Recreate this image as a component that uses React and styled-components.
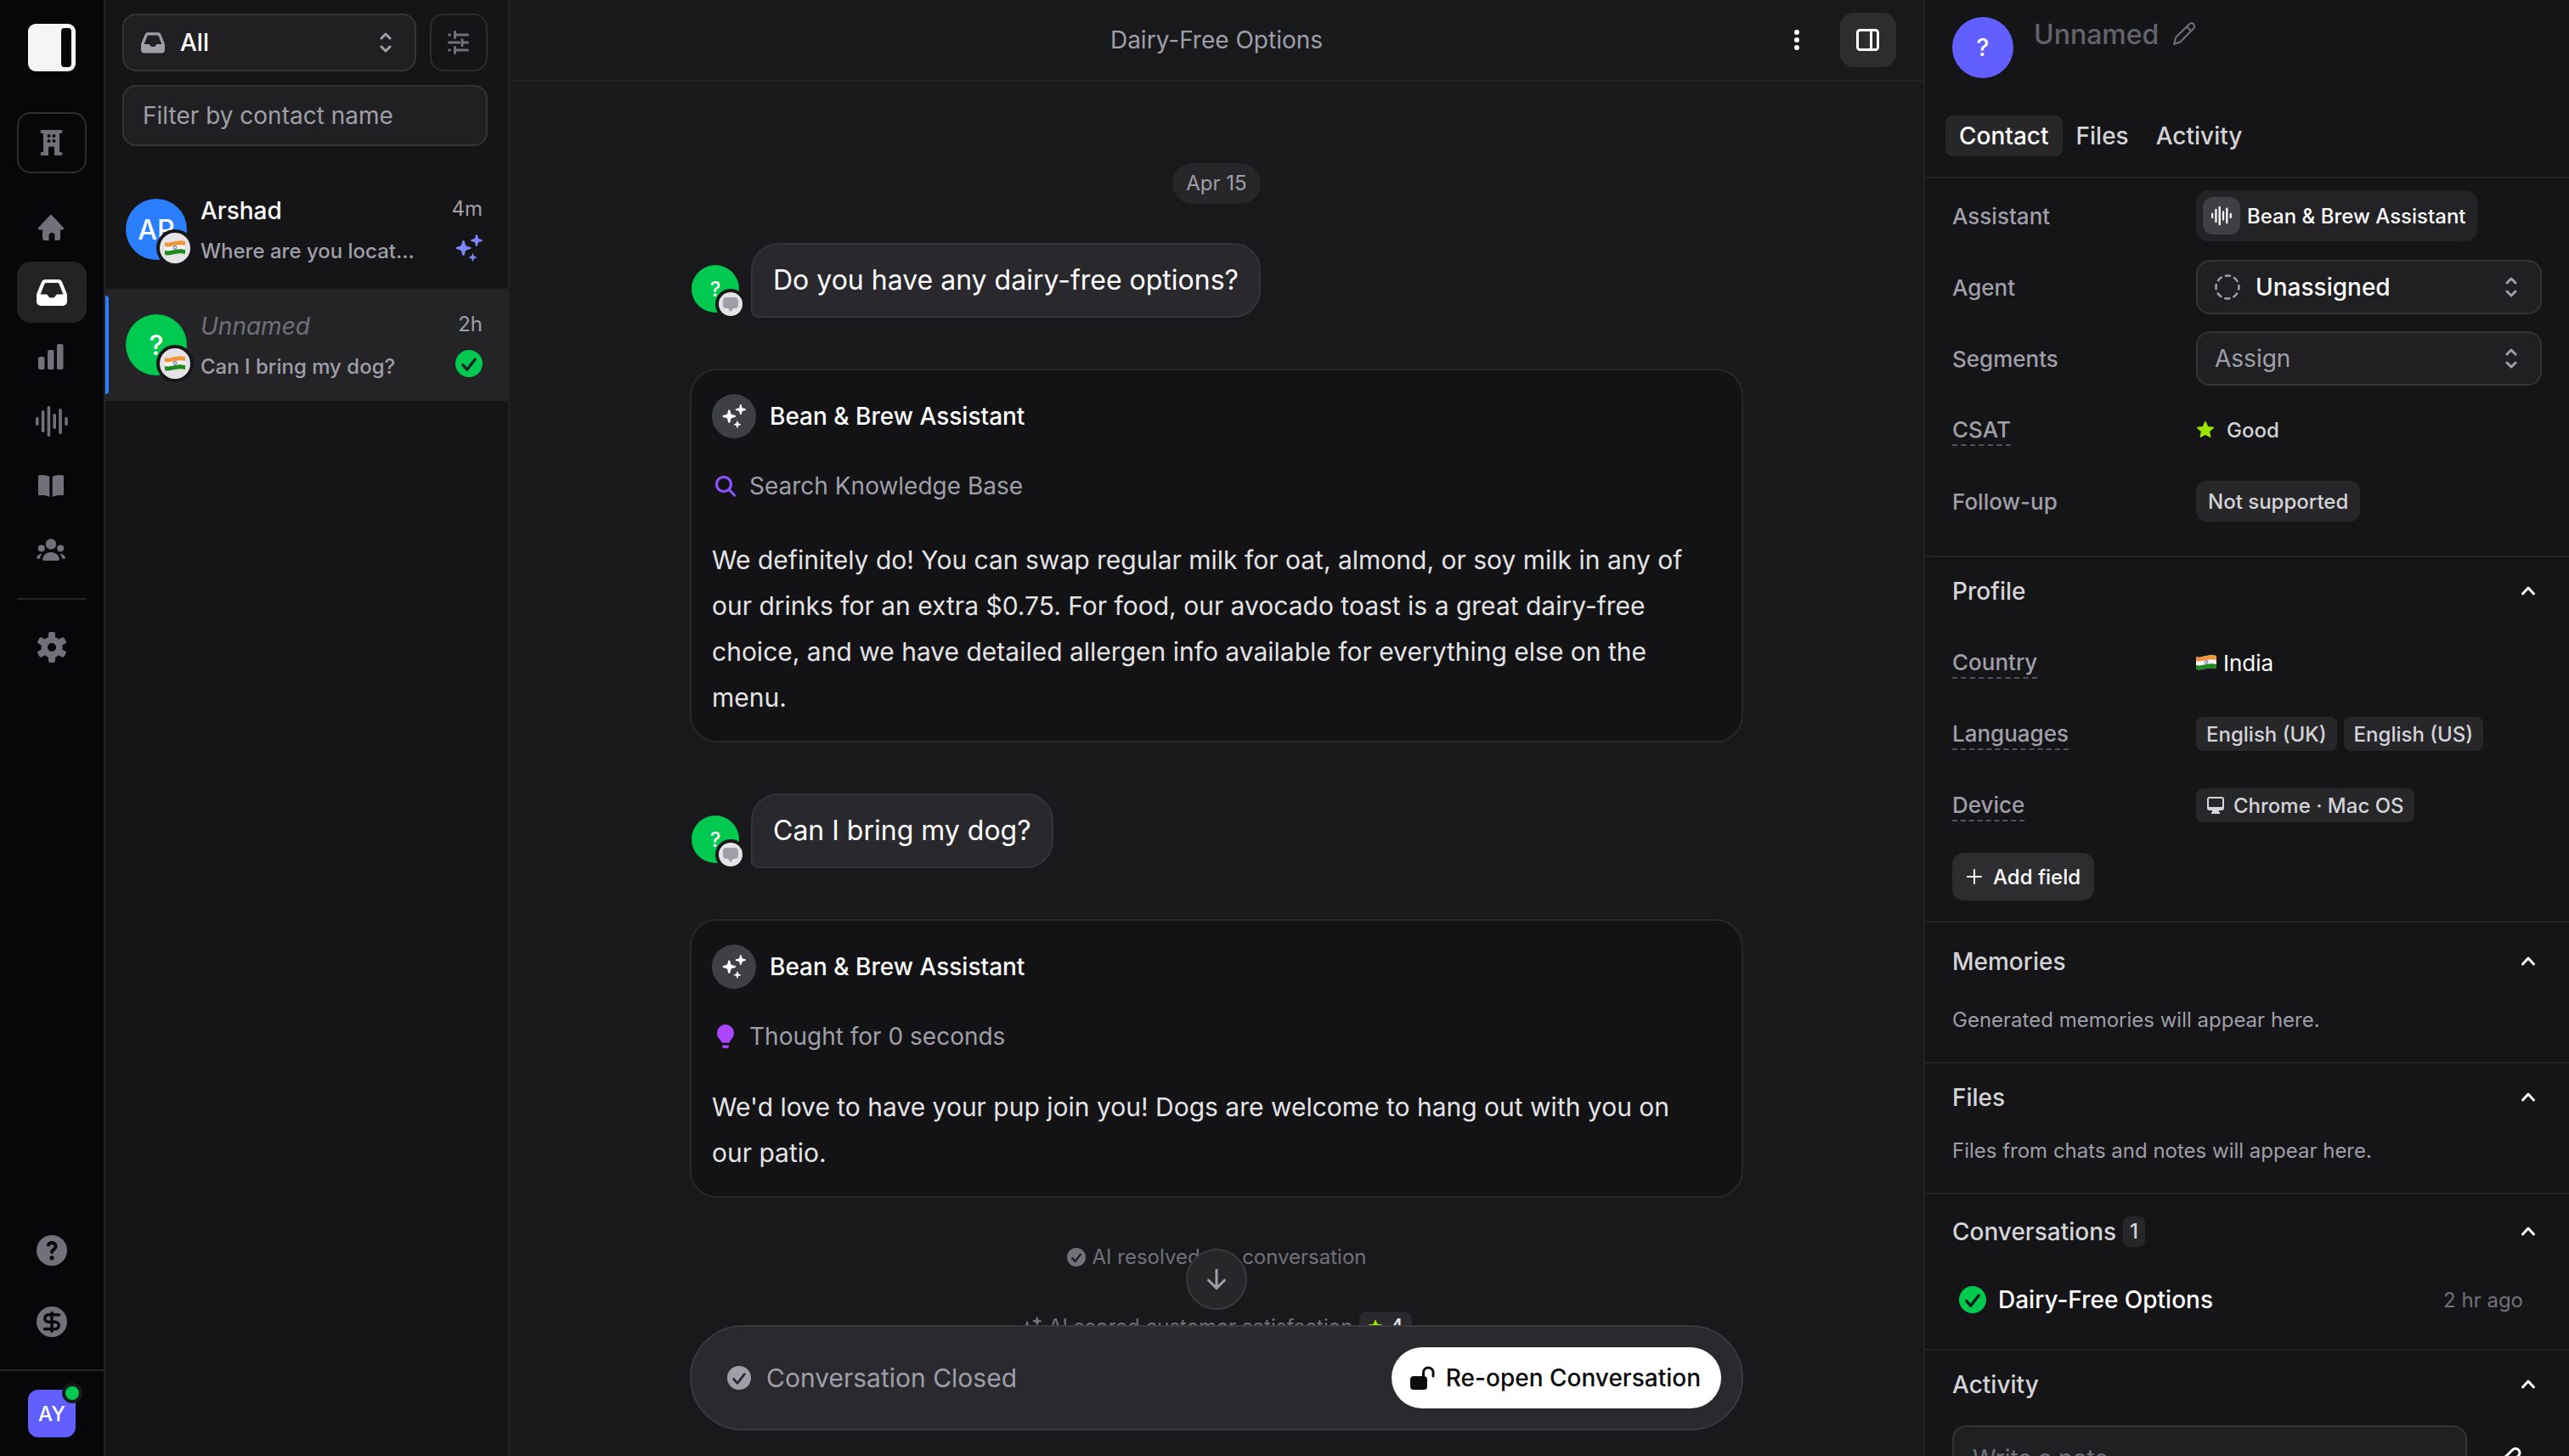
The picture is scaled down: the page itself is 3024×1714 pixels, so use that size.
import React from 'react';
import styled, { createGlobalStyle } from 'styled-components';

const GlobalStyle = createGlobalStyle`
  * {
    box-sizing: border-box;
  }

  body {
    margin: 0;
    overflow: hidden;
    background: #070709;
    color: #fff;
    font-family: Inter, 'Liberation Sans', sans-serif;
    font-size: 28px;
  }

  button,
  input,
  select,
  textarea {
    font: inherit;
    color: inherit;
    margin: 0;
  }

  button {
    border: 0;
    padding: 0;
    background: none;
    cursor: pointer;
  }

  h1, h2, h3, p, ul {
    margin: 0;
    padding: 0;
  }

  svg {
    display: block;
    flex-shrink: 0;
  }
`;

const Page = styled.div`
  display: flex;
  height: 100vh;
`;

/* ---------- icons ---------- */

const Icon = ({ size = 32, box = 32, color = 'currentColor', children }) => (
  <svg width={size} height={size} viewBox={`0 0 ${box} ${box}`} fill={color} aria-hidden="true">
    {children}
  </svg>
);

const stroke = (width) => ({
  fill: 'none',
  stroke: 'currentColor',
  strokeWidth: width,
  strokeLinecap: 'round',
  strokeLinejoin: 'round',
});

const LogoIcon = () => (
  <Icon size={56} box={56} color="#f5f5f5">
    <rect width="56" height="56" rx="9" />
    <rect x="39" y="5" width="12" height="46" rx="4" fill="#070709" />
  </Icon>
);

const BuildingIcon = () => (
  <Icon>
    <path
      fillRule="evenodd"
      d="M4.5 1h22a2 2 0 0 1 0 4H25v22h1.5a2 2 0 0 1 0 4H19v-9a1.5 1.5 0 0 0-1.5-1.5h-4A1.5 1.5 0 0 0 12 22v9H4.5a2 2 0 0 1 0-4H6V5H4.500a2 2 0 0 1 0-4ZM12.500 6a2 2 0 0 0 0 4 2 2 0 0 0 0-4Zm6 0a2 2 0 0 0 0 4 2 2 0 0 0 0-4Zm-6 6a2 2 0 0 0 0 4 2 2 0 0 0 0-4Zm6 0a2 2 0 0 0 0 4 2 2 0 0 0 0-4Z"
    />
  </Icon>
);

const HomeIcon = () => (
  <Icon>
    <path d="M13.5 1.7a2 2 0 0 1 3 0l13 14c1.1 1.3.4 2.8-1.3 2.8H26V28a3 3 0 0 1-3 3h-3.5v-5.500a3.500 3.500 0 0 0-7 0V31H8a3 3 0 0 1-3-3v-9.500H1.800c-1.700 0-2.400-1.500-1.300-2.800Z" />
  </Icon>
);

const InboxIcon = ({ size = 36 }) => (
  <Icon size={size} box={36}>
    <path
      fillRule="evenodd"
      d="M10.5 3h15a5 5 0 0 1 4.600 3.100l4.900 12c.6 1.500 1 2.500 1 4.400v6.500a5 5 0 0 1-5 5H5a5 5 0 0 1-5-5v-6.500c0-1.900.4-2.900 1-4.400l4.900-12A5 5 0 0 1 10.5 3Zm.8 4a2 2 0 0 0-1.900 1.300L4.600 20.500H11c1.200 0 2 .6 2.500 1.500.7 1.300 1.500 2.500 3 2.500h3c1.500 0 2.300-1.200 3-2.500.5-.9 1.300-1.500 2.500-1.500h6.400L26.600 8.300A2 2 0 0 0 24.700 7Z"
    />
  </Icon>
);

const BarsIcon = () => (
  <Icon>
    <rect x="0" y="16" width="7.5" height="15" rx="2" />
    <rect x="11" y="8" width="7.5" height="23" rx="2" />
    <rect x="22" y="1" width="7.5" height="30" rx="2" />
  </Icon>
);

const WaveIcon = ({ size = 38 }) => (
  <Icon size={size} box={38}>
    <rect x="0" y="14" width="3.6" height="10" rx="1.8" />
    <rect x="6.8" y="6" width="3.6" height="26" rx="1.8" />
    <rect x="13.6" y="1" width="3.6" height="36" rx="1.8" />
    <rect x="20.4" y="10" width="3.6" height="18" rx="1.8" />
    <rect x="27.2" y="4" width="3.6" height="30" rx="1.8" />
    <rect x="34.2" y="14" width="3.6" height="10" rx="1.8" />
  </Icon>
);

const BookIcon = () => (
  <Icon>
    <path d="M0 5c0-1.100.6-1.600 1.700-1.700C6 3 10 3.300 13.300 5v24C10 27 6 26.800 1.700 27 .6 27 0 26.500 0 25.500Z" />
    <path d="M30 5c0-1.100-.6-1.600-1.700-1.700C24 3 20 3.300 16.700 5v24c3.300-2 7.300-2.200 11.600-2 1.100 0 1.700-.5 1.700-1.500Z" />
  </Icon>
);

const PeopleIcon = () => (
  <Icon size={36} box={36}>
    <circle cx="17" cy="10.500" r="6.200" />
    <circle cx="5.800" cy="15.500" r="4" />
    <circle cx="28.200" cy="15.500" r="4" />
    <path d="M17 20c5.500 0 9.500 4 9.900 8 .1 1.200-.7 2-1.900 2H9c-1.200 0-2-.8-1.900-2 .4-4 4.400-8 9.900-8Z" />
    <path d="M6.600 21.800c-3.600.3-6 2.200-6.500 4.400-.2.900.5 1.600 1.500 1.600H4c.3-2.200 1.200-4.200 2.600-6Zm20.800 0c3.600.3 6 2.200 6.500 4.400.2.900-.5 1.600-1.500 1.600H30c-.3-2.200-1.200-4.200-2.600-6Z" />
  </Icon>
);

const GearIcon = () => (
  <Icon size={36} box={36}>
    {[0, 60, 120].map((angle) => (
      <rect key={angle} x="14" y="0" width="8" height="36" rx="2" transform={`rotate(${angle} 18 18)`} />
    ))}
    <circle cx="18" cy="18" r="12.500" />
    <circle cx="18" cy="18" r="5" fill="#070709" />
  </Icon>
);

const HelpIcon = () => (
  <Icon size={36} box={36}>
    <circle cx="18" cy="18" r="18" />
    <g {...stroke(4)} stroke="#070709">
      <path d="M14 11.500c1-2.200 3-2.700 4.500-2.500 2.600.3 4.300 2.300 4.100 4.700-.3 3-4.500 3.300-4.500 6.300" />
    </g>
    <circle cx="18" cy="26.800" r="2.600" fill="#070709" />
  </Icon>
);

const DollarIcon = () => (
  <Icon size={36} box={36}>
    <circle cx="18" cy="18" r="18" />
    <g {...stroke(3.5)} stroke="#070709">
      <path d="M26.500 9.800H14a4.200 4.200 0 0 0 0 8.400h8a4.200 4.200 0 0 1 0 8.400H9.500M18 7.500V29" />
    </g>
  </Icon>
);

const SelectorIcon = () => (
  <Icon size={24} box={24}>
    <path {...stroke(3)} d="m7 7 5-5 5 5M7 17l5 5 5-5" />
  </Icon>
);

const FiltersIcon = () => (
  <Icon size={28} box={28}>
    <path {...stroke(3)} d="M2.500 5h1M9.500 5h15M9.500 1.500v7M2.500 14h12M18 14h6.500M18 10.500v7M2.500 23h1M9.500 23h15M9.500 19.500v7" />
  </Icon>
);

const STAR4 =
  'M0-9C1-9 1.300-8 2-5 2.600-2.800 2.800-2.600 5-2 8-1.300 9-1 9 0S8 1.300 5 2C2.800 2.600 2.600 2.800 2 5 1.300 8 1 9 0 9S-1.300 8-2 5C-2.600 2.800-2.800 2.600-5 2-8 1.300-9 1-9 0S-8-1.300-5-2C-2.800-2.600-2.600-2.800-2-5-1.300-8-1-9 0-9Z';

const SparklesIcon = ({ size = 32 }) => (
  <Icon size={size}>
    <path d={STAR4} transform="translate(9.500 16)" />
    <path d={STAR4} transform="translate(25 7) scale(0.78)" />
    <path d={STAR4} transform="translate(20.500 27) scale(0.52)" />
  </Icon>
);

const CheckCircleIcon = ({ size = 32, mark = '#1f2023' }) => (
  <Icon size={size}>
    <circle cx="16" cy="16" r="16" />
    <path d="m8.800 17.500 4.900 5.700L23.200 11" fill="none" stroke={mark} strokeWidth="3.200" strokeLinecap="round" strokeLinejoin="round" />
  </Icon>
);

const DotsIcon = () => (
  <Icon size={32}>
    <circle cx="16" cy="7" r="3" />
    <circle cx="16" cy="16" r="3" />
    <circle cx="16" cy="25" r="3" />
  </Icon>
);

const SidebarIcon = () => (
  <Icon size={28} box={28}>
    <path {...stroke(3)} d="M4.500 2.500h18a3 3 0 0 1 3 3v17a3 3 0 0 1-3 3h-18a3 3 0 0 1-3-3v-17a3 3 0 0 1 3-3ZM17.500 2.500v23" />
  </Icon>
);

const ChatIcon = () => (
  <Icon size={20} box={20}>
    <path d="M5 2h10a4 4 0 0 1 4 4v5a4 4 0 0 1-4 4h-2l-3 4-3-4H5a4 4 0 0 1-4-4V6a4 4 0 0 1 4-4Z" />
  </Icon>
);

const SearchIcon = () => (
  <Icon size={32}>
    <path {...stroke(3.2)} d="M14 5.500a8.500 8.500 0 1 0 0 17 8.500 8.500 0 0 0 0-17ZM20.500 20.500 26.500 27" />
  </Icon>
);

const BulbIcon = () => (
  <Icon size={32}>
    <path d="M16 2a10 10 0 0 0-10 10c0 4 2 6 3.800 8.200.9 1.100 1.500 2.200 1.700 3.300h9c.2-1.100.8-2.200 1.700-3.300C24 18 26 16 26 12A10 10 0 0 0 16 2ZM12 26.500h8v.5a3 3 0 0 1-3 3h-2a3 3 0 0 1-3-3Z" />
  </Icon>
);

const ArrowDownIcon = () => (
  <Icon size={28} box={28}>
    <path {...stroke(3)} d="M14 3v21M4.500 15 14 24.500 23.500 15" />
  </Icon>
);

const StarIcon = ({ size = 20 }) => (
  <Icon size={size} box={20} color="#9ae600">
    <path
      d="m10 1.200 2.600 5.600 6.100.7-4.500 4.200 1.200 6.100L10 14.800l-5.400 3 1.200-6.100L1.300 7.500l6.100-.7Z"
      stroke="#9ae600"
      strokeLinejoin="round"
    />
  </Icon>
);

const UnlockIcon = () => (
  <Icon size={30} box={30}>
    <rect x="0" y="13" width="20" height="16" rx="4" />
    <path {...stroke(3)} d="M15.500 14V8a5.800 5.800 0 0 1 11.500 0v5" />
  </Icon>
);

const PencilIcon = () => (
  <Icon size={28} box={28}>
    <path {...stroke(2)} d="m2 26 2.200-8L20 2.500a3.200 3.200 0 0 1 5.200 4.800L9.500 23.300ZM17 5.500l5.200 5" />
  </Icon>
);

const DashedCircleIcon = () => (
  <Icon size={30} box={30}>
    <circle
      cx="15"
      cy="15"
      r="13.500"
      fill="none"
      stroke="currentColor"
      strokeWidth="2.500"
      strokeDasharray="5.300 5.300"
      strokeDashoffset="2.600"
      strokeLinecap="round"
    />
  </Icon>
);

const ChevronUpIcon = () => (
  <Icon size={24} box={24}>
    <path {...stroke(3)} d="m5.500 15 6.500-7 6.500 7" />
  </Icon>
);

const MonitorIcon = () => (
  <Icon size={22} box={22}>
    <path
      fillRule="evenodd"
      d="M4 1h14a3 3 0 0 1 3 3v10a3 3 0 0 1-3 3h-3v2h1v2H6v-2h1v-2H4a3 3 0 0 1-3-3V4a3 3 0 0 1 3-3Zm0 2a1 1 0 0 0-1 1v8a1 1 0 0 0 1 1h14a1 1 0 0 0 1-1V4a1 1 0 0 0-1-1Z"
    />
  </Icon>
);

const PlusIcon = () => (
  <Icon size={20} box={20}>
    <path {...stroke(2)} d="M10 2v16M2 10h16" />
  </Icon>
);

const ClipIcon = () => (
  <Icon size={32}>
    <path {...stroke(3)} d="m27 15-11 11a7 7 0 0 1-10-10L17.500 4.800a4.800 4.800 0 0 1 7 7L13.500 22.500" />
  </Icon>
);

const FlagIcon = ({ width = 24 }) => (
  <svg width={width} height={Math.round(width * 0.75)} viewBox="0 0 24 18" role="img" aria-label="India">
    <path d="M0 2c4 2 7 0 12-1s8-1 12 0v15c-4-1-7-1-12 0s-8 2-12 1Z" fill="#f4f4f4" />
    <path d="M0 2c4 1.500 7 0 12-1s8-1 12 0v5c-4-1-7-1-12 0s-8 2-12 1Z" fill="#f0953c" />
    <path d="M0 12c4 1 7 0 12-1s8-1 12 0v5c-4-1-7-1-12 0s-8 2-12 1Z" fill="#1d8a1d" />
    <circle cx="12" cy="8.500" r="1.800" fill="none" stroke="#4a5aa8" />
  </svg>
);

/* ---------- left rail ---------- */

const Rail = styled.nav`
  flex: 0 0 124px;
  display: flex;
  flex-direction: column;
  border-right: 2px solid #232326;
  background: #070709;
  color: #71717b;
`;

const RailMain = styled.div`
  flex: 1;
  display: flex;
  flex-direction: column;
  align-items: center;
  padding: 28px 20px;
`;

const RailButton = styled.button`
  display: flex;
  align-items: center;
  justify-content: center;
  width: 100%;
  height: 72px;
  border-radius: 16px;
  color: ${({ $active }) => ($active ? '#fff' : '#71717b')};
  background: ${({ $active }) => ($active ? '#232326' : 'transparent')};
`;

const WorkspaceButton = styled(RailButton)`
  margin: 48px 0 28px;
  border: 2px solid #2d2d30;
`;

const RailGroup = styled.div`
  display: flex;
  flex-direction: column;
  gap: ${({ $gap }) => $gap}px;
  width: 100%;
`;

const RailDivider = styled.div`
  width: 100%;
  height: 2px;
  margin: 20px 0;
  background: #232326;
`;

const RailFooter = styled.div`
  display: flex;
  justify-content: center;
  margin-top: 8px;
  padding: 22px 0;
  border-top: 2px solid #232326;
`;

const UserButton = styled.button`
  position: relative;
  width: 56px;
  height: 56px;
  border-radius: 12px;
  background: #615fff;
  color: #fff;
  font-size: 24px;
  font-weight: 500;
`;

const OnlineDot = styled.span`
  position: absolute;
  top: -8px;
  right: -8px;
  width: 24px;
  height: 24px;
  border: 4px solid #1a1a1d;
  border-radius: 50%;
  background: #00c950;
`;

/* ---------- shared controls ---------- */

const Avatar = styled.span`
  position: relative;
  flex-shrink: 0;
  display: flex;
  align-items: center;
  justify-content: center;
  width: ${({ $size }) => $size}px;
  height: ${({ $size }) => $size}px;
  border-radius: 50%;
  background: ${({ $color }) => $color};
  color: #fff;
  font-size: ${({ $font }) => $font}px;
  font-weight: 500;
`;

const AvatarBadge = styled.span`
  position: absolute;
  right: -8px;
  bottom: -8px;
  display: flex;
  align-items: center;
  justify-content: center;
  width: ${({ $size }) => $size}px;
  height: ${({ $size }) => $size}px;
  border: 4px solid #17171a;
  border-radius: 50%;
  background: #e4e4e7;
  color: #9f9fa9;
`;

const SelectBox = styled.label`
  flex: 1;
  min-width: 0;
  display: flex;
  align-items: center;
  gap: 18px;
  height: ${({ $height }) => $height}px;
  padding: 0 22px 0 20px;
  border: 2px solid #343437;
  border-radius: 16px;
  background: #202022;
  color: #9f9fa9;
`;

const Select = styled.select`
  flex: 1;
  min-width: 0;
  appearance: none;
  border: 0;
  outline: 0;
  padding: 0;
  background: transparent;
  color: ${({ $muted }) => ($muted ? '#9f9fa9' : '#fff')};
  font-weight: ${({ $muted }) => ($muted ? 400 : 500)};
`;

/* ---------- conversation list ---------- */

const ListPanel = styled.aside`
  flex: 0 0 476px;
  min-width: 0;
  border-right: 2px solid #232326;
  background: #151517;
`;

const ListHeader = styled.div`
  display: flex;
  flex-wrap: wrap;
  gap: 16px;
  padding: 16px 24px 32px 20px;
`;

const FilterButton = styled.button`
  display: flex;
  align-items: center;
  justify-content: center;
  width: 68px;
  height: 68px;
  border: 2px solid #2d2d30;
  border-radius: 16px;
  color: #71717b;
`;

const FilterInput = styled.input`
  width: 100%;
  height: 72px;
  padding: 0 22px;
  border: 2px solid #343437;
  border-radius: 16px;
  background: #202022;
  outline: 0;

  &::placeholder {
    color: #9f9fa9;
    opacity: 1;
  }
`;

const Chats = styled.ul`
  display: flex;
  flex-direction: column;
  gap: 4px;
  list-style: none;
`;

const Chat = styled.li`
  position: relative;
  display: flex;
  align-items: center;
  gap: 16px;
  height: 132px;
  padding: 0 28px 0 24px;
  background: ${({ $active }) => ($active ? '#242426' : 'transparent')};
`;

const ActiveBar = styled.span`
  position: absolute;
  left: 0;
  top: 8px;
  bottom: 8px;
  width: 4px;
  border-radius: 0 4px 4px 0;
  background: #2b7fff;
`;

const ChatText = styled.div`
  flex: 1;
  min-width: 0;
  display: flex;
  flex-direction: column;
  gap: 8px;
  padding-top: 4px;
`;

const ChatName = styled.span`
  line-height: 40px;
  font-weight: ${({ $unnamed }) => ($unnamed ? 400 : 500)};
  font-style: ${({ $unnamed }) => ($unnamed ? 'italic' : 'normal')};
  color: ${({ $unnamed }) => ($unnamed ? '#71717b' : '#fff')};
`;

const ChatPreview = styled.span`
  white-space: nowrap;
  font-size: 24px;
  line-height: 40px;
  font-weight: 500;
  color: #9f9fa9;
`;

const ChatMeta = styled.div`
  flex: 0 0 56px;
  display: flex;
  flex-direction: column;
  align-items: flex-end;
  gap: 12px;
  padding: 0 2px 4px 0;
  color: ${({ $color }) => $color};
`;

const ChatTime = styled.span`
  font-size: 24px;
  line-height: 36px;
  color: #9f9fa9;
`;

/* ---------- conversation ---------- */

const Main = styled.main`
  position: relative;
  flex: 1;
  min-width: 0;
  display: flex;
  flex-direction: column;
  background: #19191b;
`;

const MainHeader = styled.header`
  flex: 0 0 96px;
  display: grid;
  grid-template-columns: 1fr auto 1fr;
  align-items: center;
  border-bottom: 2px solid #232326;
`;

const Title = styled.h1`
  grid-column: 2;
  font-size: 28px;
  font-weight: 400;
  color: #9f9fa9;
`;

const HeaderActions = styled.div`
  display: flex;
  justify-content: flex-end;
  gap: 18px;
  padding-right: 32px;
`;

const HeaderButton = styled.button`
  display: flex;
  align-items: center;
  justify-content: center;
  width: 66px;
  height: 64px;
  border-radius: 16px;
  color: #fff;
  background: ${({ $active }) => ($active ? '#2d2d30' : 'transparent')};
`;

const Thread = styled.div`
  flex: 1;
  min-height: 0;
  overflow: hidden;
  display: flex;
  flex-direction: column;
  width: 100%;
  max-width: 1240px;
  margin: 0 auto;
  padding-top: 96px;
`;

const DatePill = styled.div`
  align-self: center;
  padding: 0 16px;
  border-radius: 24px;
  background: #27272a;
  color: #9f9fa9;
  font-size: 24px;
  line-height: 48px;
`;

const UserMessage = styled.div`
  display: flex;
  align-items: flex-end;
  gap: 14px;
  padding: 0 2px;
  margin-top: ${({ $first }) => ($first ? 46 : 60)}px;

  ${Avatar} {
    margin-bottom: 6px;
  }

  ${AvatarBadge} {
    border-color: #19191b;
  }
`;

const Bubble = styled.p`
  padding: 18px 24px;
  border: 2px solid #343437;
  border-radius: 32px 32px 32px 8px;
  background: #29292d;
  font-size: 32px;
  line-height: 48px;
`;

const ReplyCard = styled.article`
  margin-top: 60px;
  padding: 28px 24px 24px;
  border: 2px solid #28282b;
  border-radius: 32px;
  background: #131315;
`;

const ReplyHeader = styled.h2`
  display: flex;
  align-items: center;
  gap: 16px;
  font-size: 28px;
  font-weight: 500;
`;

const ToolRow = styled.button`
  display: flex;
  align-items: center;
  gap: 12px;
  height: 56px;
  margin: 28px 0 ${({ $gap }) => $gap}px;
  color: #9f9fa9;
`;

const ToolIcon = styled.span`
  color: ${({ $color }) => $color};
`;

const ReplyText = styled.p`
  padding-right: 32px;
  font-size: 30px;
  line-height: 54px;
  color: #e4e4e7;
`;

const Events = styled.div`
  display: flex;
  flex-direction: column;
  gap: 46px;
  margin-top: 52px;
`;

const Event = styled.div`
  display: flex;
  align-items: center;
  justify-content: center;
  gap: 8px;
  font-size: 24px;
  line-height: 36px;
  color: #71717b;
`;

const Score = styled.span`
  display: flex;
  align-items: center;
  gap: 8px;
  padding: 0 10px;
  border-radius: 8px;
  background: #29292d;
  color: #e4e4e7;
  font-weight: 500;
`;

/* floats over the end of the thread */
const Footer = styled.footer`
  position: absolute;
  left: 0;
  right: 0;
  bottom: 0;
  display: flex;
  flex-direction: column;
  align-items: center;
  gap: 18px;
`;

const ScrollButton = styled.button`
  display: flex;
  align-items: center;
  justify-content: center;
  width: 72px;
  height: 72px;
  border: 2px solid #3a3a3e;
  border-radius: 50%;
  background: #27272a;
  color: #9f9fa9;
`;

const ClosedWrap = styled.div`
  width: 100%;
  max-width: 1240px;
  padding-bottom: 30px;
  background: #19191b;
  border-radius: 62px 62px 0 0;
`;

const ClosedBar = styled.div`
  display: flex;
  align-items: center;
  gap: 18px;
  height: 124px;
  padding: 0 24px 0 42px;
  border: 2px solid #3a3a3e;
  border-radius: 62px;
  background: #2a2a2e;
  color: #9f9fa9;
  font-size: 30px;
`;

const ReopenButton = styled.button`
  display: flex;
  align-items: center;
  gap: 12px;
  height: 72px;
  margin-left: auto;
  padding: 0 24px 0 22px;
  border-radius: 36px;
  background: #fff;
  color: #0c0c0e;
  font-size: 28px;
  font-weight: 500;
`;

/* ---------- contact panel ---------- */

const Details = styled.aside`
  flex: 0 0 760px;
  min-width: 0;
  overflow: hidden;
  border-left: 2px solid #232326;
  background: #151517;
`;

const ContactHead = styled.div`
  display: flex;
  gap: 24px;
  padding: 20px 32px 44px;
`;

const ContactName = styled.h2`
  display: flex;
  align-items: center;
  gap: 16px;
  height: 40px;
  color: #63636c;
  font-size: 32px;
  font-weight: 500;
`;

const IconButton = styled.button`
  color: ${({ $color }) => $color};
`;

const Tabs = styled.div`
  display: flex;
  padding: 0 24px 24px;
`;

const Tab = styled.button`
  height: 48px;
  padding: 0 16px;
  border-radius: 8px;
  background: ${({ $active }) => ($active ? '#27272a' : 'transparent')};
  color: ${({ $active }) => ($active ? '#fff' : '#d4d4d8')};
  font-weight: 500;
`;

const Section = styled.section`
  padding: ${({ $top }) => $top}px 32px ${({ $bottom }) => $bottom}px;
  border-top: 2px solid #232326;
`;

const SectionHead = styled.div`
  display: flex;
  align-items: center;
  justify-content: space-between;
  height: 40px;
  padding-right: 4px;
  margin-bottom: ${({ $gap }) => $gap}px;
`;

const SectionTitle = styled.h3`
  display: flex;
  align-items: center;
  gap: 8px;
  color: #d4d4d8;
  font-size: 28px;
  font-weight: 500;
`;

const Count = styled.span`
  padding: 0 8px;
  border-radius: 8px;
  background: #27272a;
  font-size: 24px;
  line-height: 36px;
`;

const Fields = styled.div`
  display: flex;
  flex-direction: column;
  gap: 20px;
`;

const Field = styled.div`
  display: grid;
  grid-template-columns: 287px 1fr;
  align-items: center;
  height: 64px;
`;

const FieldLabel = styled.label`
  justify-self: start;
  padding-top: 2px;
  color: #9f9fa9;
  font-size: 26px;
  line-height: 34px;
  font-weight: 500;
  border-bottom: ${({ $hint }) => ($hint ? '2px dashed #52525c' : '0')};
`;

const FieldValue = styled.div`
  display: flex;
  align-items: center;
  gap: ${({ $gap = 8 }) => $gap}px;
  color: ${({ $bright }) => ($bright ? '#fff' : '#d4d4d8')};
  font-size: ${({ $bright }) => ($bright ? 26 : 24)}px;
  font-weight: ${({ $bright }) => ($bright ? 400 : 500)};
`;

const AssistantChip = styled.span`
  display: flex;
  align-items: center;
  gap: 8px;
  height: 60px;
  padding: 0 14px 0 8px;
  border-radius: 14px;
  background: #232326;
  color: #fff;
  font-size: 24px;
  font-weight: 500;
`;

const AssistantGlyph = styled.span`
  display: flex;
  align-items: center;
  justify-content: center;
  width: 44px;
  height: 44px;
  border-radius: 12px;
  background: #3f3f46;
`;

const Chip = styled.span`
  display: flex;
  align-items: center;
  gap: 10px;
  height: ${({ $tall }) => ($tall ? 48 : 40)}px;
  padding: 0 ${({ $tall }) => ($tall ? 14 : 12)}px;
  border-radius: ${({ $tall }) => ($tall ? 12 : 8)}px;
  background: #27272a;
  color: #d4d4d8;
  font-size: 24px;
  font-weight: 500;
  white-space: nowrap;
`;

const AddButton = styled.button`
  display: flex;
  align-items: center;
  gap: 12px;
  height: 56px;
  margin-top: 24px;
  padding: 0 16px;
  border-radius: 14px;
  background: #2d2d30;
  color: #fff;
  font-size: 24px;
  font-weight: 500;
`;

const Note = styled.p`
  color: #9f9fa9;
  font-size: 24px;
  line-height: 38px;
`;

const PastChat = styled.div`
  display: flex;
  align-items: center;
  gap: 14px;
  height: 56px;
  padding: 0 22px 0 8px;
  font-weight: 500;
`;

const PastTime = styled.span`
  margin-left: auto;
  color: #71717b;
  font-size: 24px;
  font-weight: 400;
`;

const NoteRow = styled.div`
  display: flex;
  align-items: flex-start;
  gap: 36px;
`;

const NoteInput = styled.textarea`
  flex: 1;
  min-width: 0;
  height: 120px;
  padding: 20px 22px;
  border: 2px solid #343437;
  border-radius: 16px;
  background: #202022;
  resize: none;
  outline: 0;

  &::placeholder {
    color: #71717b;
    opacity: 1;
  }
`;

const ClipButton = styled(IconButton)`
  padding: 24px 20px 0 0;
`;

const nav = [
  { label: 'Home', icon: <HomeIcon /> },
  { label: 'Inbox', icon: <InboxIcon />, active: true },
  { label: 'Reports', icon: <BarsIcon /> },
  { label: 'Assistants', icon: <WaveIcon /> },
  { label: 'Knowledge', icon: <BookIcon /> },
  { label: 'Contacts', icon: <PeopleIcon /> },
];

const chats = [
  {
    initials: 'AR',
    color: '#2b7fff',
    name: 'Arshad',
    preview: 'Where are you locat...',
    time: '4m',
    icon: <SparklesIcon />,
    iconColor: '#7c86ff',
  },
  {
    initials: '?',
    color: '#00c950',
    name: 'Unnamed',
    unnamed: true,
    preview: 'Can I bring my dog?',
    time: '2h',
    icon: <CheckCircleIcon />,
    iconColor: '#00c950',
    active: true,
  },
];

const CustomerMessage = ({ first, children }) => (
  <UserMessage $first={first}>
    <Avatar $size={56} $font={24} $color="#00c950">
      ?
      <AvatarBadge $size={36}>
        <ChatIcon />
      </AvatarBadge>
    </Avatar>
    <Bubble>{children}</Bubble>
  </UserMessage>
);

const Reply = ({ tool, toolIcon, toolColor, gap, children }) => (
  <ReplyCard>
    <ReplyHeader>
      <Avatar $size={52} $font={24} $color="#3f3f46">
        <SparklesIcon size={28} />
      </Avatar>
      Bean &amp; Brew Assistant
    </ReplyHeader>
    <ToolRow $gap={gap}>
      <ToolIcon $color={toolColor}>{toolIcon}</ToolIcon>
      {tool}
    </ToolRow>
    <ReplyText>{children}</ReplyText>
  </ReplyCard>
);

const PanelSection = ({ title, count, top = 20, bottom = 32, gap = 30, children }) => (
  <Section $top={top} $bottom={bottom}>
    <SectionHead $gap={gap}>
      <SectionTitle>
        {title}
        {count && <Count>{count}</Count>}
      </SectionTitle>
      <IconButton $color="#fff" aria-label={`Collapse ${title}`}>
        <ChevronUpIcon />
      </IconButton>
    </SectionHead>
    {children}
  </Section>
);

const App = () => {
  return (
    <Page>
      <GlobalStyle />
      <Rail>
        <RailMain>
          <LogoIcon />
          <WorkspaceButton aria-label="Workspace">
            <BuildingIcon />
          </WorkspaceButton>
          <RailGroup $gap={4}>
            {nav.map((item) => (
              <RailButton key={item.label} $active={item.active} aria-label={item.label}>
                {item.icon}
              </RailButton>
            ))}
          </RailGroup>
          <RailDivider />
          <RailButton aria-label="Settings">
            <GearIcon />
          </RailButton>
        </RailMain>
        <RailGroup $gap={12}>
          <RailButton aria-label="Help">
            <HelpIcon />
          </RailButton>
          <RailButton aria-label="Billing">
            <DollarIcon />
          </RailButton>
          <RailFooter>
            <UserButton>
              AY
              <OnlineDot />
            </UserButton>
          </RailFooter>
        </RailGroup>
      </Rail>

      <ListPanel>
        <ListHeader>
          <SelectBox $height={68}>
            <InboxIcon size={28} />
            <Select aria-label="Inbox">
              <option>All</option>
            </Select>
            <SelectorIcon />
          </SelectBox>
          <FilterButton aria-label="Filters">
            <FiltersIcon />
          </FilterButton>
          <FilterInput aria-label="Filter by contact name" placeholder="Filter by contact name" />
        </ListHeader>
        <Chats>
          {chats.map((chat) => (
            <Chat key={chat.name} $active={chat.active}>
              {chat.active && <ActiveBar />}
              <Avatar $size={72} $font={32} $color={chat.color}>
                {chat.initials}
                <AvatarBadge $size={44}>
                  <FlagIcon />
                </AvatarBadge>
              </Avatar>
              <ChatText>
                <ChatName $unnamed={chat.unnamed}>{chat.name}</ChatName>
                <ChatPreview>{chat.preview}</ChatPreview>
              </ChatText>
              <ChatMeta $color={chat.iconColor}>
                <ChatTime>{chat.time}</ChatTime>
                {chat.icon}
              </ChatMeta>
            </Chat>
          ))}
        </Chats>
      </ListPanel>

      <Main>
        <MainHeader>
          <Title>Dairy-Free Options</Title>
          <HeaderActions>
            <HeaderButton aria-label="More">
              <DotsIcon />
            </HeaderButton>
            <HeaderButton $active aria-label="Toggle details">
              <SidebarIcon />
            </HeaderButton>
          </HeaderActions>
        </MainHeader>
        <Thread>
          <DatePill>Apr 15</DatePill>
          <CustomerMessage first>Do you have any dairy-free options?</CustomerMessage>
          <Reply tool="Search Knowledge Base" toolIcon={<SearchIcon />} toolColor="#8e51ff" gap={32}>
            We definitely do! You can swap regular milk for oat, almond, or soy milk in any of our drinks for an extra
            $0.75. For food, our avocado toast is a great dairy-free choice, and we have detailed allergen info
            available for everything else on the menu.
          </Reply>
          <CustomerMessage>Can I bring my dog?</CustomerMessage>
          <Reply tool="Thought for 0 seconds" toolIcon={<BulbIcon />} toolColor="#ad46ff" gap={28}>
            We'd love to have your pup join you! Dogs are welcome to hang out with you on our patio.
          </Reply>
          <Events>
            <Event>
              <CheckCircleIcon size={22} mark="#19191b" />
              AI resolved the conversation
            </Event>
            <Event>
              <SparklesIcon size={24} />
              AI scored customer satisfaction
              <Score>
                <StarIcon size={18} />4
              </Score>
            </Event>
          </Events>
        </Thread>
        <Footer>
          <ScrollButton aria-label="Scroll to latest">
            <ArrowDownIcon />
          </ScrollButton>
          <ClosedWrap>
            <ClosedBar>
              <CheckCircleIcon size={28} mark="#2a2a2e" />
              Conversation Closed
              <ReopenButton>
                <UnlockIcon />
                Re-open Conversation
              </ReopenButton>
            </ClosedBar>
          </ClosedWrap>
        </Footer>
      </Main>

      <Details>
        <ContactHead>
          <Avatar $size={72} $font={28} $color="#615fff">
            ?
          </Avatar>
          <ContactName>
            Unnamed
            <IconButton $color="#71717b" aria-label="Edit name">
              <PencilIcon />
            </IconButton>
          </ContactName>
        </ContactHead>
        <Tabs>
          <Tab $active>Contact</Tab>
          <Tab>Files</Tab>
          <Tab>Activity</Tab>
        </Tabs>

        <Section $top={12} $bottom={32}>
          <Fields>
            <Field>
              <FieldLabel as="span">Assistant</FieldLabel>
              <FieldValue>
                <AssistantChip>
                  <AssistantGlyph>
                    <WaveIcon size={24} />
                  </AssistantGlyph>
                  Bean &amp; Brew Assistant
                </AssistantChip>
              </FieldValue>
            </Field>
            <Field>
              <FieldLabel htmlFor="agent">Agent</FieldLabel>
              <SelectBox as="div" $height={64}>
                <DashedCircleIcon />
                <Select id="agent">
                  <option>Unassigned</option>
                </Select>
                <SelectorIcon />
              </SelectBox>
            </Field>
            <Field>
              <FieldLabel htmlFor="segments">Segments</FieldLabel>
              <SelectBox as="div" $height={64}>
                <Select id="segments" $muted>
                  <option>Assign</option>
                </Select>
                <SelectorIcon />
              </SelectBox>
            </Field>
            <Field>
              <FieldLabel as="span" $hint>
                CSAT
              </FieldLabel>
              <FieldValue $gap={14}>
                <StarIcon size={22} />
                Good
              </FieldValue>
            </Field>
            <Field>
              <FieldLabel as="span">Follow-up</FieldLabel>
              <FieldValue>
                <Chip $tall>Not supported</Chip>
              </FieldValue>
            </Field>
          </Fields>
        </Section>

        <PanelSection title="Profile" bottom={24} gap={32}>
          <Fields>
            <Field>
              <FieldLabel as="span" $hint>
                Country
              </FieldLabel>
              <FieldValue $bright>
                <FlagIcon />
                India
              </FieldValue>
            </Field>
            <Field>
              <FieldLabel as="span" $hint>
                Languages
              </FieldLabel>
              <FieldValue>
                <Chip>English (UK)</Chip>
                <Chip>English (US)</Chip>
              </FieldValue>
            </Field>
            <Field>
              <FieldLabel as="span" $hint>
                Device
              </FieldLabel>
              <FieldValue>
                <Chip>
                  <MonitorIcon />
                  Chrome · Mac OS
                </Chip>
              </FieldValue>
            </Field>
          </Fields>
          <AddButton>
            <PlusIcon />
            Add field
          </AddButton>
        </PanelSection>

        <PanelSection title="Memories" top={26} bottom={30}>
          <Note>Generated memories will appear here.</Note>
        </PanelSection>

        <PanelSection title="Files" top={20} bottom={30} gap={24}>
          <Note>Files from chats and notes will appear here.</Note>
        </PanelSection>

        <PanelSection title="Conversations" count={1} top={24} bottom={30} gap={32}>
          <PastChat>
            <ToolIcon $color="#00c950">
              <CheckCircleIcon mark="#151517" />
            </ToolIcon>
            Dairy-Free Options
            <PastTime>2 hr ago</PastTime>
          </PastChat>
        </PanelSection>

        <PanelSection title="Activity" gap={28}>
          <NoteRow>
            <NoteInput aria-label="Write a note" placeholder="Write a note..." />
            <ClipButton $color="#fff" aria-label="Attach a file">
              <ClipIcon />
            </ClipButton>
          </NoteRow>
        </PanelSection>
      </Details>
    </Page>
  );
};

export default App;
